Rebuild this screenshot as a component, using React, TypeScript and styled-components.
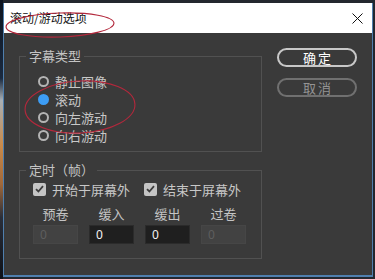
import React from 'react'
import styled, { createGlobalStyle } from 'styled-components'

const GlobalStyle = createGlobalStyle`
  html, body {
    margin: 0;
    padding: 0;
    background: #1d222b;
  }
  body {
    font-family: "Noto Sans CJK SC", "Noto Sans", sans-serif;
  }
`

const Screen = styled.div`
  position: relative;
  display: flex;
  align-items: flex-start;
  width: 375px;
  height: 279px;
  padding-top: 3px;
  box-sizing: border-box;
  background: #23272f;
  overflow: hidden;
`

// sliver of the desktop wallpaper visible at the left edge
const Wallpaper = styled.div`
  flex: 0 0 3px;
  align-self: stretch;
  margin-top: -3px;
  background: linear-gradient(
    to bottom,
    #0d1420 0%,
    #1a2a40 28%,
    #a9b0b5 36%,
    #c98a4a 52%,
    #a0683a 66%,
    #2a2f3a 78%,
    #0e1118 100%
  );
`

const Window = styled.div`
  flex: 0 0 370px;
  height: 274px;
  box-sizing: border-box;
  display: flex;
  flex-direction: column;
  border: 1px solid #4f7fae;
  border-top: none;
  border-bottom-width: 2px;
  background: #3a3a3a;
`

const TitleBar = styled.div`
  height: 30px;
  flex: 0 0 30px;
  display: flex;
  align-items: center;
  justify-content: space-between;
  padding: 0 9px 0 6px;
  background: #ffffff;
`

const Title = styled.span`
  font-size: 12px;
  color: #111;
  line-height: 16px;
`

const CloseButton = styled.button`
  display: flex;
  align-items: center;
  justify-content: center;
  width: 12px;
  height: 12px;
  padding: 0;
  border: none;
  background: none;
`

const Body = styled.div`
  flex: 1;
  display: grid;
  grid-template-columns: 243px 80px;
  column-gap: 15px;
  align-items: start;
  padding: 15px 15px 0 15px;
`

const LeftColumn = styled.div`
  display: flex;
  flex-direction: column;
  gap: 10px;
`

const Group = styled.fieldset`
  margin: 0;
  min-width: 0;
  padding: 0;
  border: 1px solid #515151;
`

const GroupContent = styled.div<{ $inset: number; $bottom: number; $top: number }>`
  padding: ${({ $top, $inset, $bottom }) => `${$top}px 0 ${$bottom}px ${$inset}px`};
`

const Legend = styled.legend`
  margin-left: 6px;
  padding: 0 3px;
  font-size: 13px;
  line-height: 16px;
  color: #c4c4c4;
`

const RadioRow = styled.label`
  display: flex;
  align-items: center;
  gap: 6px;
  height: 18px;
  font-size: 13px;
  color: #c8c8c8;
`

const RadioDot = styled.span<{ $checked?: boolean }>`
  width: 11px;
  height: 11px;
  box-sizing: border-box;
  border-radius: 50%;
  border: 2px solid ${({ $checked }) => ($checked ? '#3d9df5' : '#b4b4b4')};
  background: ${({ $checked }) => ($checked ? '#3d9df5' : 'transparent')};
`

const CheckRow = styled.div`
  display: flex;
  gap: 14px;
  height: 16px;
  margin-bottom: 9px;
`

const CheckItem = styled.label`
  display: flex;
  align-items: center;
  gap: 6px;
  font-size: 13px;
  color: #c8c8c8;
`

const CheckBox = styled.span`
  display: flex;
  align-items: center;
  justify-content: center;
  width: 13px;
  height: 13px;
  border-radius: 2px;
  background: #c4c4c4;
`

const FieldGrid = styled.div`
  display: grid;
  grid-template-columns: repeat(4, 45px);
  column-gap: 11px;
  row-gap: 3px;
`

const FieldLabel = styled.span`
  font-size: 13px;
  line-height: 16px;
  color: #c4c4c4;
  text-align: center;
`

const NumberInput = styled.input`
  width: 45px;
  height: 19px;
  box-sizing: border-box;
  margin: 0;
  padding: 0 0 0 6px;
  border: 1px solid #2b2b2b;
  background: #1f1f1f;
  color: #f2f2f2;
  font-family: "Noto Sans", sans-serif;
  font-size: 12px;
  outline: none;

  &:disabled {
    background: #424242;
    border-color: #464646;
    color: #5e5e5e;
  }
`

const ButtonColumn = styled.div`
  display: flex;
  flex-direction: column;
  gap: 11px;
`

const PillButton = styled.button<{ $muted?: boolean }>`
  width: 80px;
  height: 19px;
  box-sizing: border-box;
  padding: 0;
  border-radius: 10px;
  border: 2px solid ${({ $muted }) => ($muted ? '#707070' : '#c8c8c8')};
  background: transparent;
  color: ${({ $muted }) => ($muted ? '#949494' : '#ffffff')};
  font-family: "Noto Sans CJK SC", sans-serif;
  font-size: 13px;
  line-height: 15px;
  letter-spacing: 2px;
  text-indent: 2px;
`

const Annotations = styled.svg`
  position: absolute;
  top: 0;
  left: 0;
  pointer-events: none;
`

const radios = [
  { label: '静止图像', checked: false },
  { label: '滚动', checked: true },
  { label: '向左游动', checked: false },
  { label: '向右游动', checked: false },
]

const fields = [
  { label: '预卷', disabled: true },
  { label: '缓入', disabled: false },
  { label: '缓出', disabled: false },
  { label: '过卷', disabled: true },
]

const Check = () => (
  <svg width="9" height="8" viewBox="0 0 9 8">
    <path d="M1 4.2 L3.4 6.5 L8 1.2" fill="none" stroke="#3c3c3c" strokeWidth="1.8" />
  </svg>
)

const App = () => {
  return (
    <Screen>
      <GlobalStyle />
      <Wallpaper />
      <Window>
        <TitleBar>
          <Title>滚动/游动选项</Title>
          <CloseButton>
            <svg width="11" height="11" viewBox="0 0 11 11">
              <path d="M0.5 0.5 L10.5 10.5 M10.5 0.5 L0.5 10.5" stroke="#111" strokeWidth="1" />
            </svg>
          </CloseButton>
        </TitleBar>
        <Body>
          <LeftColumn>
            <Group>
              <Legend>字幕类型</Legend>
              <GroupContent $top={8} $inset={18} $bottom={7}>
                {radios.map((r) => (
                  <RadioRow key={r.label}>
                    <RadioDot $checked={r.checked} />
                    {r.label}
                  </RadioRow>
                ))}
              </GroupContent>
            </Group>
            <Group>
              <Legend>定时（帧）</Legend>
              <GroupContent $top={3} $inset={13} $bottom={14}>
                <CheckRow>
                  <CheckItem>
                    <CheckBox>
                      <Check />
                    </CheckBox>
                    开始于屏幕外
                  </CheckItem>
                  <CheckItem>
                    <CheckBox>
                      <Check />
                    </CheckBox>
                    结束于屏幕外
                  </CheckItem>
                </CheckRow>
                <FieldGrid>
                  {fields.map((f) => (
                    <FieldLabel key={f.label}>{f.label}</FieldLabel>
                  ))}
                  {fields.map((f) => (
                    <NumberInput key={f.label} defaultValue="0" disabled={f.disabled} />
                  ))}
                </FieldGrid>
              </GroupContent>
            </Group>
          </LeftColumn>
          <ButtonColumn>
            <PillButton>确定</PillButton>
            <PillButton $muted>取消</PillButton>
          </ButtonColumn>
        </Body>
      </Window>
      <Annotations width="375" height="279" viewBox="0 0 375 279">
        <ellipse cx="60" cy="25" rx="54" ry="12" fill="none" stroke="#b3283c" strokeWidth="1.1" transform="rotate(-2 60 25)" />
        <ellipse cx="80" cy="107" rx="55" ry="26" fill="none" stroke="#b3283c" strokeWidth="1.1" transform="rotate(-3 80 107)" />
      </Annotations>
    </Screen>
  )
}

export default App
